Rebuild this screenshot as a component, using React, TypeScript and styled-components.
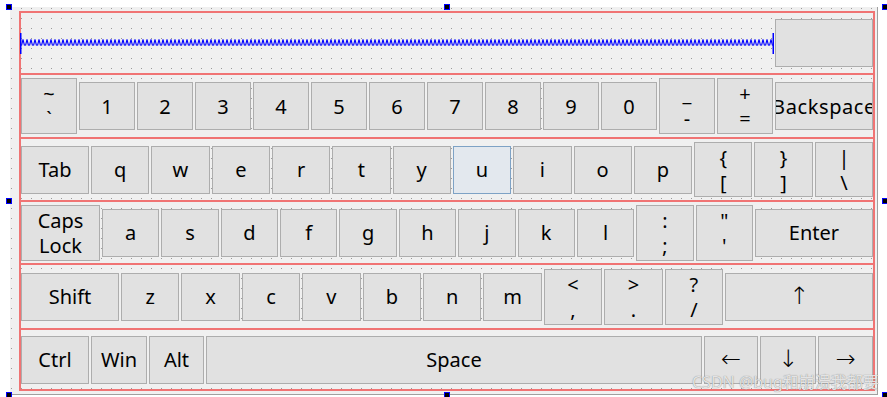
import styled, { createGlobalStyle, css } from 'styled-components'

const GlobalStyle = createGlobalStyle`
  html, body {
    margin: 0;
    padding: 0;
    background: #ffffff;
  }
  body {
    font-family: 'Noto Sans', 'DejaVu Sans', sans-serif;
  }
`

const Page = styled.div`
  position: relative;
  width: 887px;
  height: 397px;
  overflow: hidden;
  box-sizing: border-box;
  padding: 7px 0 0 10px;
`

const Form = styled.div`
  width: 868px;
  height: 388px;
  box-sizing: border-box;
  padding: 4px 0 0 9px;
  border-right: 1px solid #a0a0a0;
  border-bottom: 1px solid #a0a0a0;
  background-color: #f0f0f0;
  background-image: conic-gradient(from 270deg at 1px 1px, #9a9a9a 90deg, transparent 0);
  background-size: 10px 10px;
  background-position: 1px 1px;
`

const Layout = styled.div`
  width: 856px;
  height: 380px;
  box-sizing: border-box;
  border: 1px solid #f07474;
  display: flex;
  flex-direction: column;
`

const Row = styled.div<{ $h: number; $gap?: number }>`
  height: ${(p) => p.$h}px;
  flex: none;
  box-sizing: border-box;
  border: 1px solid #f07474;
  display: flex;
  align-items: center;
  gap: ${(p) => p.$gap ?? 2}px;
`

const Key = styled.button<{ $w?: number; $h?: number; $hover?: boolean; $big?: boolean; $wide?: boolean }>`
  box-sizing: border-box;
  height: ${(p) => p.$h ?? 48}px;
  ${(p) =>
    p.$w
      ? css`
          width: ${p.$w}px;
          flex: none;
        `
      : css`
          flex: 1 1 0;
          min-width: 0;
        `}
  margin: 0;
  padding: 0;
  border: 1px solid ${(p) => (p.$hover ? '#7ea2c5' : '#adadad')};
  background: ${(p) => (p.$hover ? '#e3e8ee' : '#e1e1e1')};
  font-family: ${(p) => (p.$big ? "'DejaVu Sans', 'Noto Sans', sans-serif" : "'Noto Sans', 'DejaVu Sans', sans-serif")};
  font-size: ${(p) => (p.$big ? 24 : 20)}px;
  font-weight: ${(p) => (p.$big ? 300 : 400)};
  letter-spacing: ${(p) => (p.$wide ? 0.6 : 0)}px;
  line-height: 25px;
  color: #000;
  display: flex;
  flex-direction: column;
  align-items: center;
  justify-content: center;
  overflow: hidden;
  white-space: nowrap;
`

const Spacer = styled.svg`
  flex: 1 1 0;
  min-width: 0;
  height: 21px;
  margin-left: -1px;
  display: block;
`

const Handle = styled.div<{ $x: number; $y: number }>`
  position: absolute;
  left: ${(p) => p.$x}px;
  top: ${(p) => p.$y}px;
  width: 6px;
  height: 6px;
  box-sizing: border-box;
  border: 1px solid #0000ff;
  background: #000;
`

const Watermark = styled.div`
  position: absolute;
  left: 692px;
  top: 369px;
  font-family: 'Noto Sans', 'Noto Sans CJK SC', sans-serif;
  font-size: 16px;
  color: rgba(238, 238, 238, 0.92);
  text-shadow: 0 0 1px rgba(100, 100, 100, 0.9);
  white-space: nowrap;
`

type K = { t: string; w?: number; h?: number; hover?: boolean; big?: boolean; wide?: boolean }

const rows: { h: number; keys: K[] }[] = [
  {
    h: 64,
    keys: [
      { t: '~\n`', h: 56 },
      { t: '1' }, { t: '2' }, { t: '3' }, { t: '4' }, { t: '5' },
      { t: '6' }, { t: '7' }, { t: '8' }, { t: '9' }, { t: '0' },
      { t: '_\n-', h: 56 },
      { t: '+\n=', h: 56 },
      { t: 'Backspace', w: 98, wide: true },
    ],
  },
  {
    h: 63,
    keys: [
      { t: 'Tab', w: 68 },
      { t: 'q' }, { t: 'w' }, { t: 'e' }, { t: 'r' }, { t: 't' },
      { t: 'y' }, { t: 'u', hover: true }, { t: 'i' }, { t: 'o' }, { t: 'p' },
      { t: '{\n[', h: 55 },
      { t: '}\n]', h: 55 },
      { t: '|\n\\', h: 55 },
    ],
  },
  {
    h: 63,
    keys: [
      { t: 'Caps\nLock', w: 79, h: 56 },
      { t: 'a' }, { t: 's' }, { t: 'd' }, { t: 'f' }, { t: 'g' },
      { t: 'h' }, { t: 'j' }, { t: 'k' }, { t: 'l' },
      { t: ':\n;', h: 56 },
      { t: '"\n\'', h: 56 },
      { t: 'Enter', w: 118 },
    ],
  },
  {
    h: 65,
    keys: [
      { t: 'Shift', w: 98 },
      { t: 'z' }, { t: 'x' }, { t: 'c' }, { t: 'v' }, { t: 'b' },
      { t: 'n' }, { t: 'm' },
      { t: '<\n,', h: 56 },
      { t: '>\n.', h: 56 },
      { t: '?\n/', h: 56 },
      { t: '↑', w: 148, big: true },
    ],
  },
  {
    h: 61,
    keys: [
      { t: 'Ctrl', w: 68 },
      { t: 'Win', w: 56 },
      { t: 'Alt', w: 55 },
      { t: 'Space' },
      { t: '←', w: 54, big: true },
      { t: '↓', w: 56, big: true },
      { t: '→', w: 55, big: true },
    ],
  },
]

const handles = [
  [6, 4], [444, 4], [882, 4],
  [6, 198], [882, 198],
  [6, 392], [444, 392], [882, 392],
]

export default function App() {
  return (
    <Page>
      <GlobalStyle />
      <Form>
        <Layout>
          <Row $h={62} $gap={1}>
            <Spacer>
              <defs>
                <pattern id="coil" patternUnits="userSpaceOnUse" x="1" y="6" width="4" height="7">
                  <path d="M0.5 6.5 L2 0.5 L3.5 6.5" fill="none" stroke="#0000ff" strokeWidth="1.1" />
                </pattern>
              </defs>
              <rect x="1" y="6" width="100%" height="7" fill="url(#coil)" />
              <rect x="0" y="0" width="1.5" height="21" fill="#0000ff" />
              <rect x="100%" y="0" width="1.5" height="21" fill="#0000ff" transform="translate(-1.5 0)" />
            </Spacer>
            <Key $w={98} />
          </Row>
          {rows.map((row, ri) => (
            <Row key={ri} $h={row.h}>
              {row.keys.map((k, ki) => (
                <Key key={ki} $w={k.w} $h={k.h} $hover={k.hover} $big={k.big} $wide={k.wide}>
                  {k.t.split('\n').map((line, li) => (
                    <span key={li}>{line}</span>
                  ))}
                </Key>
              ))}
            </Row>
          ))}
        </Layout>
      </Form>
      {handles.map(([x, y], i) => (
        <Handle key={i} $x={x} $y={y} />
      ))}
      <Watermark>CSDN @bug和崩溃我都要</Watermark>
    </Page>
  )
}
